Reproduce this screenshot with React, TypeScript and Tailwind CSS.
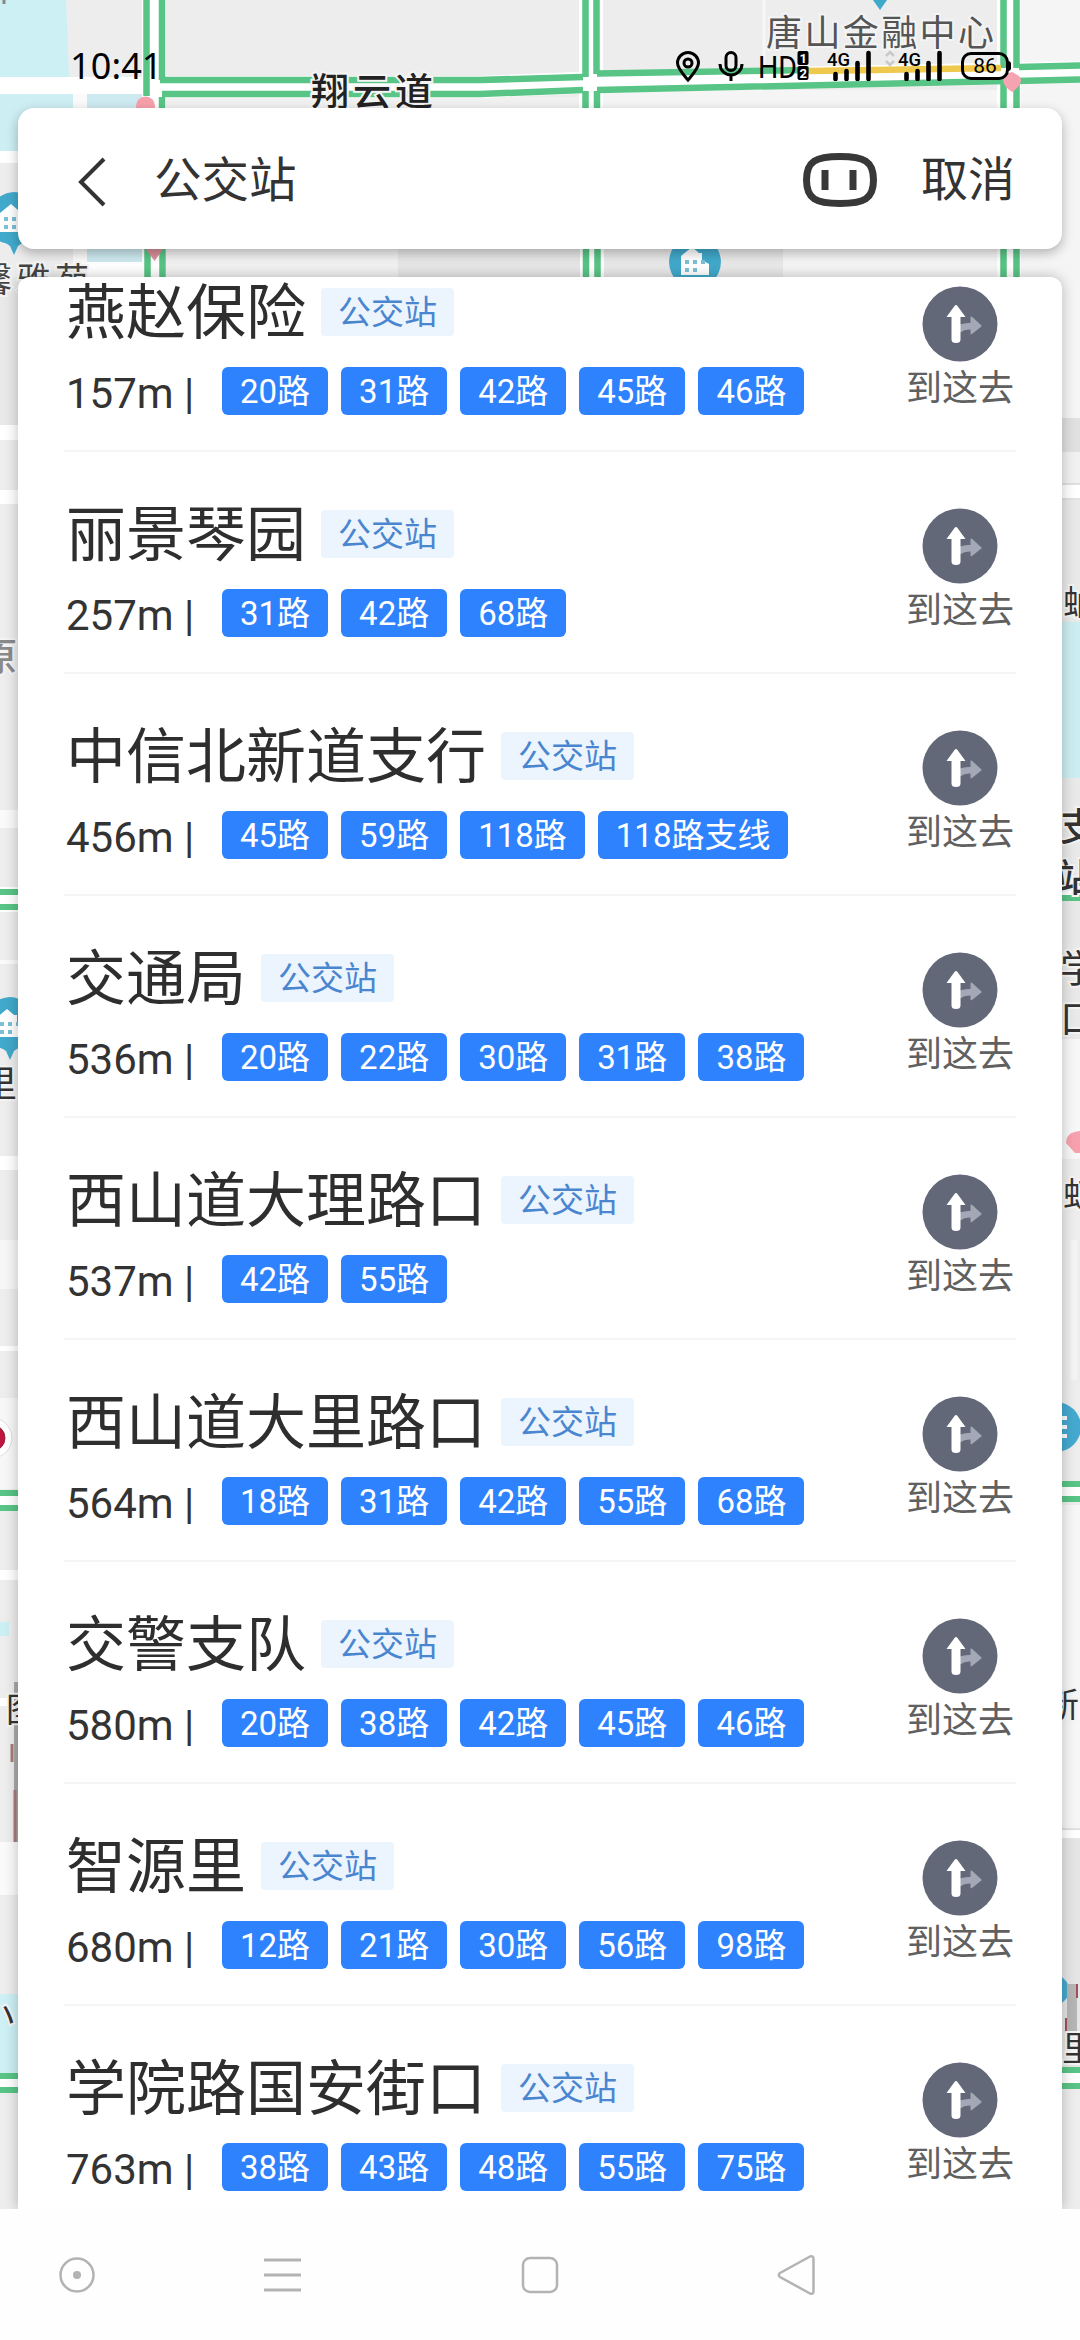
import React from 'react';

interface Station {
  name: string;
  distance: string;
  lines: string[];
}

const STATIONS: Station[] = [
  { name: '燕赵保险', distance: '157m', lines: ['20路', '31路', '42路', '45路', '46路'] },
  { name: '丽景琴园', distance: '257m', lines: ['31路', '42路', '68路'] },
  { name: '中信北新道支行', distance: '456m', lines: ['45路', '59路', '118路', '118路支线'] },
  { name: '交通局', distance: '536m', lines: ['20路', '22路', '30路', '31路', '38路'] },
  { name: '西山道大理路口', distance: '537m', lines: ['42路', '55路'] },
  { name: '西山道大里路口', distance: '564m', lines: ['18路', '31路', '42路', '55路', '68路'] },
  { name: '交警支队', distance: '580m', lines: ['20路', '38路', '42路', '45路', '46路'] },
  { name: '智源里', distance: '680m', lines: ['12路', '21路', '30路', '56路', '98路'] },
  { name: '学院路国安街口', distance: '763m', lines: ['38路', '43路', '48路', '55路', '75路'] },
];

const GREEN = '#58c485';

const HousePin = ({ x, y }: { x: number; y: number }) => (
  <g transform={`translate(${x} ${y})`}>
    <path d="M0 -27a27 27 0 0 1 13 50q-6 1-9 4l-4 9-4-9q-3-3-9-4a27 27 0 0 1 13-50Z" fill="#41a9cb" />
    <path d="M-14 13v-19l11-9 7 6h3v7l7 4v11Z" fill="#fff" />
    <path d="M-10-2h4v4h-4zM-2-2h4v4h-4zM6-2h4v4h-4zM-10 6h4v4h-4zM-2 6h4v4h-4z" fill="#7cc0d5" />
  </g>
);

const MapLayer = () => (
  <svg className="absolute inset-0" width="1080" height="2210" viewBox="0 0 1080 2210">
    <rect width="1080" height="2210" fill="#ededed" />
    {/* top blocks */}
    <rect x="165" y="97" width="417" height="180" fill="#f1f1f1" />
    <rect x="398" y="249" width="184" height="28" fill="#e6e6e6" />
    <rect x="601" y="249" width="182" height="28" fill="#e8e8e8" />
    <rect x="601" y="90" width="479" height="159" fill="#f5f5f5" />
    <rect x="783" y="249" width="297" height="28" fill="#f4f4f4" />
    <rect x="1019" width="61" height="420" fill="#f5f5f5" />
    <path d="M764 0v72" stroke="#f7f7f7" strokeWidth="3" />
    <path d="M0 0h66l3 77H0Z" fill="#cdf0f5" />
    <rect y="77" width="143" height="17" fill="#fff" />
    <rect y="94" width="73" height="57" fill="#cdeef3" />
    <rect x="73" y="94" width="14" height="183" fill="#fafafa" />
    <rect x="87" y="94" width="56" height="168" fill="#cdeaf0" />
    <rect y="151" width="18" height="12" fill="#fff" />
    <rect x="87" y="262" width="56" height="15" fill="#fff" />
    <path d="M4 0v4" stroke="#888" strokeWidth="3" />

    {/* left edge */}
    <rect y="277" width="18" height="148" fill="#e9e9e9" />
    <rect y="425" width="18" height="15" fill="#fff" />
    <rect y="490" width="18" height="14" fill="#fff" />
    <rect y="810" width="18" height="18" fill="#fafafa" />
    <rect y="887" width="18" height="25" fill="#fff" />
    <path d="M0 892h18M0 907h18M0 1493h18M0 1508h18M0 2076h18M0 2090h18" stroke={GREEN} strokeWidth="6" />
    <rect y="960" width="18" height="4" fill="#fafafa" />
    <rect y="1156" width="18" height="14" fill="#fff" />
    <rect y="1240" width="18" height="49" fill="#f6f6f6" />
    <rect y="1346" width="18" height="5" fill="#fff" />
    <rect y="1398" width="18" height="91" fill="#f7f7f7" />
    <circle cx="-8" cy="1438" r="20" fill="#fff" stroke="#ddd" />
    <circle cx="-8" cy="1438" r="13" fill="#c0143c" stroke="#8d2540" />
    <rect y="1496" width="18" height="9" fill="#fff" />
    <rect y="1570" width="18" height="10" fill="#fff" />
    <rect y="1622" width="9" height="14" fill="#cbeff3" />
    <rect y="1698" width="18" height="8" fill="#fff" />
    <path d="M16 1682v160" stroke="#aaa" strokeWidth="4" />
    <path d="M15 1790v52M12 1744v18" stroke="#a87c78" strokeWidth="3" />
    <rect y="1842" width="18" height="53" fill="#fafafa" />
    <rect y="1994" width="18" height="79" fill="#cdf0f5" />
    <rect y="2079" width="18" height="8" fill="#fff" />

    {/* right edge */}
    <rect x="1060" y="418" width="20" height="34" fill="#e0e0e0" />
    <rect x="1060" y="452" width="20" height="32" fill="#f1f1f1" />
    <rect x="1060" y="484" width="20" height="16" fill="#fff" />
    <path d="M1060 484h20M1060 499h20" stroke="#d8d8d8" strokeWidth="1.5" />
    <rect x="1060" y="500" width="20" height="540" fill="#e9e9e9" />
    <rect x="1060" y="622" width="20" height="156" fill="#cceef2" />
    <rect x="1060" y="880" width="20" height="20" fill="#fff" />
    <path d="M1060 883h20M1060 898h20M1060 1484h20M1060 1499h20M1060 2070h20M1060 2086h20" stroke={GREEN} strokeWidth="6" />
    <rect x="1060" y="1039" width="20" height="120" fill="#f7f7f7" />
    <path d="M1066 1143q0-11 14-12v22h-5Z" fill="#f7a1ae" />
    <path d="M1074 1240v140" stroke="#f4f4f4" strokeWidth="7" />
    <rect x="1060" y="1487" width="20" height="9" fill="#fff" />
    <rect x="1060" y="1505" width="20" height="324" fill="#f6f6f6" />
    <rect x="1060" y="1830" width="20" height="8" fill="#fff" />
    <path d="M1060 1829h20" stroke="#d0d0d0" />
    <rect x="1060" y="1838" width="20" height="229" fill="#e5e5e5" />
    <rect x="1060" y="2073" width="20" height="10" fill="#fff" />
    <circle cx="1056" cy="1427" r="25" fill="#45a9cf" />
    <path d="M1058 1418h9M1058 1427h9M1058 1436h9" stroke="#fff" strokeWidth="4" />
    <circle cx="1054" cy="1990" r="15" fill="#45a9cf" />
    <rect x="1067" y="1984" width="10" height="48" fill="#b5b5b5" />
    <path d="M1077 1984v14M1066 2018v14" stroke="#a0505c" strokeWidth="2" />

    {/* traffic roads */}
    <path d="M154 0v108M154 249v28M591 0v108M592 249v28M1009 0v108M1009 249v28" stroke="#fff" strokeWidth="24" />
    <path d="M162 87H480L600 82L1080 72" stroke="#fff" strokeWidth="22" fill="none" />
    <path
      d="M146.500 0v96M162 0v80M162 97v11M147.500 249v28M162.500 249v28M585.500 0v77M596.500 0v74M585.500 91v17M597 91v17M586 249v28M597.500 249v28M1003.500 0v68M1016.500 0v68M1003.500 82v26M1016.500 82v26M1003.500 249v28M1016.500 249v28"
      stroke={GREEN}
      strokeWidth="6.500"
    />
    <path d="M160 80H480L583 77M162 94H480L583 90M597 73.500L809 70M1019 67L1080 65.500M597 90L1080 79.500" stroke={GREEN} strokeWidth="6.500" fill="none" />
    <path d="M809 71L1001 68" stroke="#efc94e" strokeWidth="6.500" />

    <path d="M136 106a9.500 9.500 0 0 1 19 0v3h-19Z" fill="#f7a0ab" />
    <path d="M146 249h17l-8.500 12Z" fill="#dd8f9c" />
    <path d="M1003 80q0-6 9-8q9 4 9 8q0 6-9 12q-9-6-9-12Z" fill="#f5a3b0" />
    <path d="M873 0h14l-7 10Z" fill="#3fa9c9" />

    <HousePin x={14} y={219} />
    <HousePin x={695} y={262} />
    <HousePin x={10} y={1024} />

    <g fontFamily='"Noto Sans CJK SC", sans-serif' fontSize="36" fill="#333" stroke="#f4f4f4" strokeWidth="4" paintOrder="stroke">
      <text x="311" y="105" fontSize="38" letterSpacing="4" fontWeight="500" fill="#222">翔云道</text>
      <text x="766" y="46" letterSpacing="2.400" fill="#555">唐山金融中心</text>
      <text x="-22" y="292" fontSize="34" letterSpacing="4.500" fill="#444">馨雅苑</text>
      <text x="-21" y="670" fontSize="38" fontWeight="500" fill="#8a8a8a">原</text>
      <text x="-19" y="1097" fill="#333">里</text>
      <text x="6" y="1722" fontSize="34">图</text>
      <text x="-22" y="2028" fontSize="36">小</text>
      <text x="1063" y="615" fontSize="34">蚰</text>
      <text x="1060" y="840" fontSize="38" fontWeight="500">支</text>
      <text x="1056" y="891" fontSize="38" fontWeight="500">站</text>
      <text x="1060" y="982" fontSize="38">学</text>
      <text x="1060" y="1032" fontSize="38">口</text>
      <text x="1063" y="1207" fontSize="34">虹</text>
      <text x="1045" y="1717" fontSize="34">新</text>
      <text x="1062" y="2061" fontSize="34">里</text>
    </g>
  </svg>
);

const Signal = () => (
  <svg width="44" height="32" viewBox="0 0 44 32">
    <text x="0" y="16.500" fontFamily="Roboto, sans-serif" fontSize="19" fontWeight="500" textLength="23" lengthAdjust="spacingAndGlyphs">4G</text>
    <path d="M8.500 25v5M19.500 22v8M30.500 14v16M41.500 4v26" stroke="#000" strokeWidth="4.600" strokeLinecap="round" />
  </svg>
);

const StatusBar = () => (
  <div className="relative flex h-[108px] items-start pt-[49px] pl-[70px] text-black">
    <span className="w-[91px] font-['Noto_Sans'] text-[36px] leading-[34px] tracking-[0.1px]">10:41</span>
    <svg className="ml-[514px]" width="26" height="34" viewBox="0 0 26 34" fill="none" stroke="#000" strokeWidth="3">
      <path d="M13 31C8 25 2.500 19.500 2.500 14a10.500 10.500 0 0 1 21 0c0 5.500-5.500 11-10.500 17Z" />
      <circle cx="13" cy="14" r="4" />
    </svg>
    <svg className="ml-4" width="28" height="34" viewBox="0 0 28 34" fill="none" stroke="#000" strokeWidth="3">
      <rect x="9" y="3.500" width="10" height="18" rx="5" />
      <path d="M3 15a11 11 0 0 0 22 0M14 26v6" />
    </svg>
    <svg className="ml-[14px]" width="52" height="34" viewBox="0 0 52 34">
      <text x="-1" y="29" fontFamily="Roboto, sans-serif" fontSize="32" textLength="39" lengthAdjust="spacingAndGlyphs">HD</text>
      <rect x="38.500" y="2" width="11" height="14" rx="2" />
      <rect x="38.500" y="17" width="11" height="14" rx="2" />
      <g fontFamily="Roboto, sans-serif" fontSize="13" fontWeight="700" fill="#fff">
        <text x="40.500" y="13.500">1</text>
        <text x="40.500" y="28.500">2</text>
      </g>
    </svg>
    <span className="ml-4"><Signal /></span>
    <svg className="ml-[14px]" width="10" height="20" viewBox="0 0 10 20" fill="none" stroke="#c9c9c9" strokeWidth="2.500">
      <path d="m1 7 4-4 4 4M1 12l4 4 4-4" />
    </svg>
    <span className="ml-[3px]"><Signal /></span>
    <div className="relative mt-[3px] ml-[19px] flex h-[28px] w-[48px] items-center justify-center rounded-[10px] border-[3px] border-black font-['Roboto'] text-[21px] leading-none">
      86
      <span className="absolute top-[6px] -right-[5px] h-[10px] w-[3px] rounded-r-sm bg-black" />
    </div>
  </div>
);

const SearchBar = () => (
  <div className="relative mx-[18px] flex h-[141px] items-center rounded-2xl bg-white pt-[6px] pl-[58px] text-[#333] shadow-[0_4px_12px_rgba(0,0,0,0.28)]">
    <svg width="30" height="52" viewBox="0 0 30 52" fill="none" stroke="#333" strokeWidth="4">
      <path d="M28 3 5 26l23 23" />
    </svg>
    <span className="ml-[48px] text-[47.5px] leading-none">公交站</span>
    <svg className="-mt-1 ml-auto" width="74" height="54" viewBox="0 0 74 54" fill="none" stroke="#383838">
      <path d="M37 3.500C61 3.500 70.500 8 70.500 27S61 50.500 37 50.500 3.500 46 3.500 27 13 3.500 37 3.500Z" strokeWidth="7" />
      <path d="M22 17v20M50 17v20" strokeWidth="7" />
    </svg>
    <button className="-mt-1 mr-[47px] ml-[44px] text-[47px] leading-none">取消</button>
  </div>
);

const GoIcon = () => (
  <svg width="76" height="76" viewBox="0 0 76 76">
    <circle cx="38" cy="38" r="37.500" fill="#626878" />
    <path d="M38 38.500q5-2 10.500-1.500v-5.500q0-1.500 1.500-.7L60 40 50 48q-1.500 1-1.500-.7v-3.800Q43 43 38 46.500Z" fill="#a3a8b6" />
    <path d="M34 19q.8 0 1.500 1L43.500 31h-5v22.500q0 3.500-4.500 3.500t-4.500-3.500V31h-5L32.500 20q.7-1 1.500-1Z" fill="#fff" />
  </svg>
);

const StationRow = ({ station }: { station: Station }) => (
  <li className="flex h-[222px] justify-between border-b-2 border-[#f5f5f5]">
    <div className="pt-[50px] pl-[2px]">
      <div className="flex items-center">
        <h3 className="pt-[3px] text-[60px] leading-[61px] text-[#2e2e2e]">{station.name}</h3>
        <span className="ml-[15px] flex h-[48px] w-[133px] items-center justify-center rounded bg-[#ecf4fe] text-[33px] leading-none text-[#4a86cf]">
          公交站
        </span>
      </div>
      <div className="mt-[23px] flex h-[48px] items-center">
        <span className="w-[156px] pt-[6px] text-[42px] leading-none whitespace-pre text-[#333]">{station.distance} |</span>
        <div className="flex gap-[13px]">
          {station.lines.map((line) => (
            <span key={line} className="flex h-[48px] items-center rounded-md bg-[#2f82fd] px-[18px] text-[33px] leading-none text-white">
              {line}
            </span>
          ))}
        </div>
      </div>
    </div>
    <button className="mr-[2px] flex flex-col items-center pt-[56px]">
      <GoIcon />
      <span className="mt-[8px] text-[36px] leading-[38px] text-[#606060]">到这去</span>
    </button>
  </li>
);

const NavBar = () => (
  <nav className="relative flex h-[131px] items-center bg-[#fefefe] pl-[58px]">
    <svg width="38" height="38" viewBox="0 0 38 38" fill="none" stroke="#b3b3b3" strokeWidth="2.500">
      <circle cx="19" cy="19" r="16.500" />
      <circle cx="19" cy="19" r="4" fill="#b3b3b3" stroke="none" />
    </svg>
    <svg className="ml-[168px]" width="37" height="38" viewBox="0 0 37 38" stroke="#b3b3b3" strokeWidth="2.800">
      <path d="M0 4h37M0 19h37M0 34h37" />
    </svg>
    <svg className="ml-[220px]" width="38" height="38" viewBox="0 0 38 38" fill="none" stroke="#b3b3b3" strokeWidth="2.500">
      <rect x="2" y="2" width="34" height="34" rx="7" />
    </svg>
    <svg className="ml-[218px]" width="40" height="42" viewBox="0 0 40 42" fill="none" stroke="#b3b3b3" strokeWidth="2.500" strokeLinejoin="round">
      <path d="M3 19 33 2.500q3.500-1 3.500 2v33q0 3-3.500 2L3 23q-2.500-2 0-4Z" />
    </svg>
  </nav>
);

export default function App() {
  return (
    <div className="relative flex h-[2340px] w-[1080px] flex-col overflow-hidden bg-white font-['Roboto','Noto_Sans_CJK_SC',sans-serif]">
      <MapLayer />
      <StatusBar />
      <SearchBar />
      <main className="relative mx-[18px] mt-[28px] h-[1932px] shrink-0 rounded-t-xl shadow-[0_0_14px_rgba(0,0,0,0.25)]">
        <div className="h-full overflow-hidden rounded-t-xl bg-white">
          <ul className="mx-[46px] -mt-[47px]">
            {STATIONS.map((station) => (
              <StationRow key={station.name} station={station} />
            ))}
          </ul>
        </div>
      </main>
      <NavBar />
    </div>
  );
}
